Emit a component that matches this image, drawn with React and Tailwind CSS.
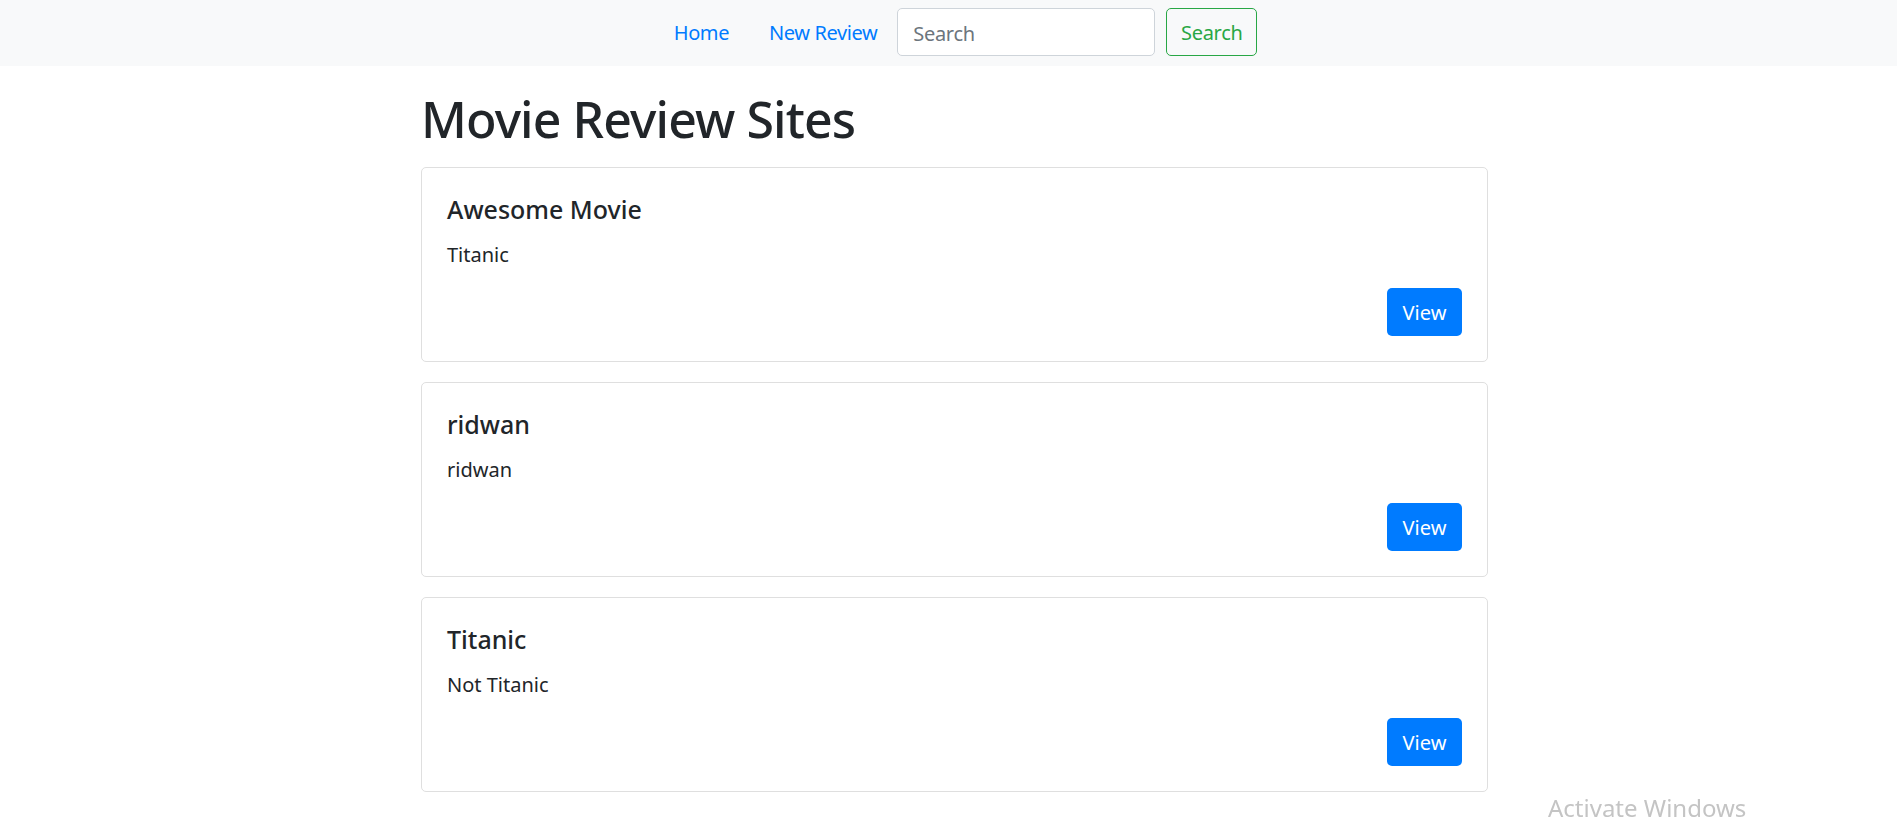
import React from 'react';

const reviews = [
  { id: 1, title: 'Awesome Movie', movie: 'Titanic' },
  { id: 2, title: 'ridwan', movie: 'ridwan' },
  { id: 3, title: 'Titanic', movie: 'Not Titanic' },
];

const font = { fontFamily: '"Noto Sans", "Open Sans", Arial, sans-serif' };

function Navbar() {
  return (
    <nav className="bg-[#f8f9fa] h-[66px] flex justify-center items-start pt-[8px] pl-[14px]">
      <div className="flex items-center h-[48px]">
        <a href="#" className="px-[20px] pt-[2px] text-[20px] leading-[30px] tracking-[-0.4px] text-[#007bff]">Home</a>
        <a href="#" className="px-[20px] pt-[2px] text-[20px] leading-[30px] tracking-[-0.4px] text-[#007bff]">New Review</a>
        <input
          type="text"
          placeholder="Search"
          className="w-[258px] h-[48px] px-[15px] pt-[2px] text-[20px] tracking-[-0.3px] bg-white border border-[#ced4da] rounded-[5px] outline-none placeholder:text-[#6c757d] text-[#495057]"
        />
        <button className="ml-[11px] w-[91px] h-[48px] pt-[2px] text-[20px] tracking-[-0.3px] text-[#28a745] border border-[#28a745] rounded-[5px] bg-transparent">
          Search
        </button>
      </div>
    </nav>
  );
}

function ReviewCard({ review }) {
  return (
    <div className="border border-[#dfdfdf] rounded-[5px] bg-white p-[25px] mb-[20px]">
      <h5 className="text-[25px] leading-[30px] pt-[1px] font-medium text-[#212529] mb-[14px]">{review.title}</h5>
      <p className="text-[20px] leading-[30px] pt-[2px] text-[#212529] mb-[18px]">{review.movie}</p>
      <div className="flex justify-end">
        <button className="w-[75px] h-[48px] pt-[1px] bg-[#007bff] text-white text-[20px] rounded-[5px]">View</button>
      </div>
    </div>
  );
}

export default function App() {
  return (
    <div className="min-h-screen bg-white relative" style={font}>
      <Navbar />
      <main className="ml-[421px] w-[1067px]">
        <h1 className="text-[50px] leading-[60px] tracking-[-0.9px] font-medium text-[#212529] mt-[23px] mb-[18px]">Movie Review Sites</h1>
        {reviews.map(r => (
          <ReviewCard key={r.id} review={r} />
        ))}
      </main>
      <div className="fixed left-[1548px] top-[793px] text-[24px] leading-[30px] text-[#c4c4c4] pointer-events-none">
        Activate Windows
      </div>
    </div>
  );
}
